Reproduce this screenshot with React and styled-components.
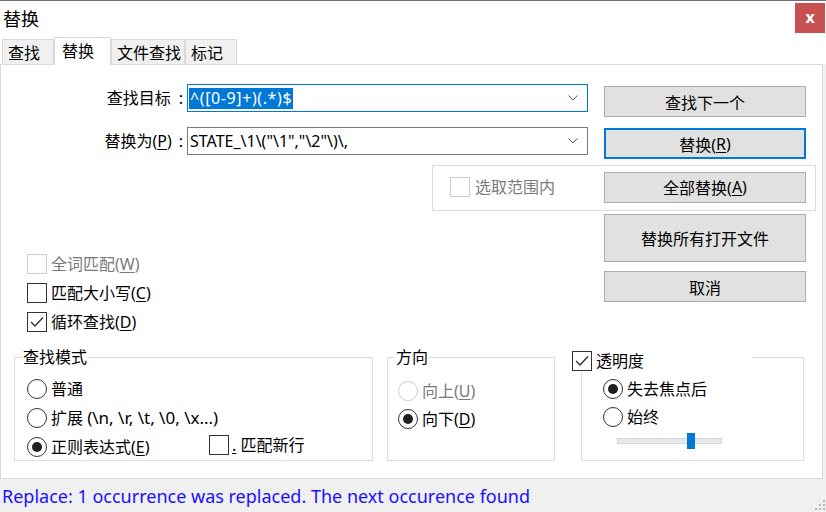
import React from "react";
import styled, { createGlobalStyle, css } from "styled-components";

const FONT = `"Noto Sans", "Noto Sans CJK SC", sans-serif`;

const Global = createGlobalStyle`
  html, body { margin: 0; padding: 0; background: #fff; }
  body { font-family: ${FONT}; }
  *, *::before, *::after { box-sizing: border-box; }
`;

const Window = styled.div`
  width: 826px;
  height: 512px;
  display: flex;
  flex-direction: column;
  background: #fff;
  border-top: 1px solid #6f6f6f;
  overflow: hidden;
  font-family: ${FONT};
  color: #000;
`;

const TitleBar = styled.div`
  height: 36px;
  display: flex;
  align-items: flex-start;
  justify-content: space-between;
  padding: 0 1px 0 3px;
`;

const Title = styled.div`
  font-size: 18px;
  line-height: 36px;
`;

const CloseButton = styled.div`
  margin-top: 2px;
  width: 30px;
  height: 30px;
  background: #c75050;
  color: #fff;
  font-weight: bold;
  font-size: 16px;
  display: flex;
  align-items: center;
  justify-content: center;
  line-height: 1;
  padding-bottom: 3px;
`;

const TabStrip = styled.div`
  height: 27px;
  display: flex;
  align-items: flex-end;
  padding-left: 2px;
  position: relative;
  z-index: 2;
`;

const Tab = styled.div`
  width: ${(p) => p.$w}px;
  height: 25px;
  background: #f0f0f0;
  border: 1px solid #d9d9d9;
  border-bottom: none;
  font-size: 16px;
  line-height: 24px;
  padding: 1px 0 0 5px;
  white-space: nowrap;
  ${(p) =>
    p.$active &&
    css`
      height: 28px;
      margin-bottom: -1px;
      background: #fff;
      padding-left: 7px;
      position: relative;
      z-index: 3;
    `}
`;

const Main = styled.div`
  height: 415px;
  display: flex;
  background: #f0f0f0;
`;

const Panel = styled.div`
  width: 823px;
  height: 415px;
  background: #fff;
  border: 1px solid #d9d9d9;
  padding-top: 19px;
  display: flex;
  flex-direction: column;
`;

const FieldRow = styled.div`
  display: flex;
  align-items: flex-start;
  margin-top: ${(p) => p.$mt || 0}px;
`;

const FieldLabel = styled.div`
  width: 186px;
  display: flex;
  justify-content: flex-end;
  font-size: 16px;
  line-height: 28px;
  padding-right: 4px;
  white-space: nowrap;
`;

const Colon = styled.span`
  margin-left: ${(p) => p.$gap}px;
`;

const Combo = styled.div`
  width: 401px;
  height: 28px;
  border: 1px solid ${(p) => (p.$focus ? "#0078d7" : "#7a7a7a")};
  display: flex;
  align-items: center;
  padding-left: 1px;
  font-size: 16px;
  white-space: nowrap;
`;

const ComboText = styled.span`
  line-height: 21px;
  padding: 0 1px;
  letter-spacing: ${(p) => p.$ls || 0}px;
  ${(p) =>
    p.$selected &&
    css`
      background: #0078d7;
      color: #fff;
    `}
`;

const Chevron = styled.svg`
  margin-left: auto;
  margin-right: 9px;
  flex: none;
`;

const Button = styled.div`
  width: 202px;
  height: ${(p) => p.$h || 31}px;
  margin-top: ${(p) => p.$mt || 0}px;
  margin-left: ${(p) => (p.$push ? "auto" : `${p.$ml || 0}px`)};
  background: #e1e1e1;
  border: ${(p) => (p.$focus ? "2px solid #0078d7" : "1px solid #adadad")};
  display: flex;
  align-items: center;
  justify-content: center;
  font-size: 16px;
  white-space: nowrap;
  flex: none;
`;

const Mn = styled.span`
  text-decoration: underline;
  text-underline-offset: 2px;
  text-decoration-thickness: 1px;
`;

const Latin = styled.span`
  font-size: 17px;
`;

const SelBox = styled.div`
  margin-top: 6px;
  margin-left: 431px;
  width: 384px;
  height: 46px;
  border: 1px solid #dcdcdc;
  display: flex;
  align-items: center;
  padding: 0 9px 2px 17px;
`;

const Option = styled.div`
  display: flex;
  align-items: center;
  gap: ${(p) => p.$gap ?? 4}px;
  height: ${(p) => p.$h || 20}px;
  width: ${(p) => (p.$w ? `${p.$w}px` : "auto")};
  margin-top: ${(p) => p.$mt || 0}px;
  font-size: 16px;
  line-height: 20px;
  white-space: nowrap;
  color: ${(p) => (p.$disabled ? "#7a7a7a" : "#000")};
  flex: none;
`;

const Text = styled.span`
  white-space: nowrap;
`;

const Box = styled.span`
  width: 20px;
  height: 20px;
  border: 1px solid ${(p) => (p.$disabled ? "#cccccc" : "#333")};
  background: #fff;
  display: inline-flex;
  align-items: center;
  justify-content: center;
  flex: none;
`;

const Circle = styled.span`
  width: 20px;
  height: 20px;
  border-radius: 50%;
  border: 1px solid ${(p) => (p.$disabled ? "#cccccc" : "#333")};
  background: #fff;
  display: inline-flex;
  align-items: center;
  justify-content: center;
  flex: none;
  &::after {
    content: "";
    display: ${(p) => (p.$checked ? "block" : "none")};
    width: 10px;
    height: 10px;
    border-radius: 50%;
    background: #1f1f1f;
  }
`;

const LowerRow = styled.div`
  display: flex;
  align-items: flex-start;
`;

const LeftChecks = styled.div`
  padding: 43px 0 0 26px;
  display: flex;
  flex-direction: column;
  gap: 9px;
`;

const RightCol = styled.div`
  margin-left: auto;
  margin-right: 16px;
  padding-top: 3px;
  display: flex;
  flex-direction: column;
  gap: 9px;
`;

const GroupsRow = styled.div`
  display: flex;
  align-items: flex-start;
  padding-left: 13px;
  margin-top: 25px;
`;

const GroupBox = styled.div`
  position: relative;
  width: ${(p) => p.$w}px;
  height: 104px;
  margin-left: ${(p) => p.$ml || 0}px;
  border: 1px solid #dcdcdc;
  padding: ${(p) => p.$pt}px 0 0 ${(p) => p.$pl}px;
  display: flex;
  flex-direction: column;
  gap: ${(p) => p.$gap}px;
`;

const Caption = styled.div`
  position: absolute;
  top: -11px;
  left: 7px;
  background: #fff;
  padding: 0 1px;
  font-size: 16px;
  line-height: 20px;
  white-space: nowrap;
`;

const CheckCaption = styled.div`
  position: absolute;
  top: -7px;
  left: -10px;
  width: 180px;
  height: 21px;
  background: #fff;
  display: flex;
  align-items: flex-start;
  gap: 4px;
  font-size: 16px;
  line-height: 20px;
`;

const RadioRow = styled.div`
  display: flex;
  align-items: center;
  height: 22px;
`;

const SliderWrap = styled.div`
  height: 16px;
  margin-top: -1px;
  padding-left: 14px;
  display: flex;
  align-items: center;
`;

const SliderTrack = styled.div`
  position: relative;
  width: 105px;
  height: 6px;
  background: #e7eaea;
  border: 1px solid #d6d6d6;
`;

const SliderThumb = styled.div`
  position: absolute;
  top: 50%;
  width: 8px;
  height: 16px;
  margin-top: -8px;
  background: #0078d7;
`;

const StatusBar = styled.div`
  height: 33px;
  background: #f0f0f0;
  display: flex;
  align-items: center;
  padding-left: 2px;
  font-size: 18px;
  color: #1a10ff;
  position: relative;
  white-space: nowrap;
`;

const Grip = styled.svg`
  position: absolute;
  right: 1px;
  bottom: 2px;
`;

const CheckMark = () => (
  <svg width="16" height="16" viewBox="0 0 16 16">
    <polyline points="2,8 6,12 14,3.5" fill="none" stroke="#333" strokeWidth="1.4" />
  </svg>
);

const CheckBox = ({ checked, disabled }) => (
  <Box $disabled={disabled}>{checked && <CheckMark />}</Box>
);

const ChevronIcon = () => (
  <Chevron width="10" height="6" viewBox="0 0 10 6">
    <polyline points="0.5,0.5 5,5 9.5,0.5" fill="none" stroke="#555" strokeWidth="1" />
  </Chevron>
);

export default function App() {
  const sliderValue = 0.71;
  return (
    <>
      <Global />
      <Window>
        <TitleBar>
          <Title>替换</Title>
          <CloseButton>x</CloseButton>
        </TitleBar>
        <TabStrip>
          <Tab $w={52}>查找</Tab>
          <Tab $w={57} $active>替换</Tab>
          <Tab $w={74}>文件查找</Tab>
          <Tab $w={52}>标记</Tab>
        </TabStrip>
        <Main>
          <Panel>
            <FieldRow>
              <FieldLabel>
                查找目标<Colon $gap={8}>:</Colon>
              </FieldLabel>
              <Combo $focus>
                <ComboText $selected $ls={0.6}>^([0-9]+)(.*)$</ComboText>
                <ChevronIcon />
              </Combo>
              <Button $ml={16} $mt={2}>查找下一个</Button>
            </FieldRow>
            <FieldRow $mt={10}>
              <FieldLabel>
                替换为(<Mn>P</Mn>)<Colon $gap={7}>:</Colon>
              </FieldLabel>
              <Combo>
                <ComboText>STATE_\1\("\1","\2"\)\,</ComboText>
                <ChevronIcon />
              </Combo>
              <Button $ml={16} $mt={1} $focus>
                替换(<Mn>R</Mn>)
              </Button>
            </FieldRow>
            <SelBox>
              <Option $gap={5} $disabled>
                <CheckBox disabled />
                <Text>选取范围内</Text>
              </Option>
              <Button $push>
                全部替换(<Mn>A</Mn>)
              </Button>
            </SelBox>
            <LowerRow>
              <LeftChecks>
                <Option $disabled>
                  <CheckBox disabled />
                  <Text>
                    全词匹配(<Mn>W</Mn>)
                  </Text>
                </Option>
                <Option>
                  <CheckBox />
                  <Text>
                    匹配大小写(<Mn>C</Mn>)
                  </Text>
                </Option>
                <Option>
                  <CheckBox checked />
                  <Text>
                    循环查找(<Mn>D</Mn>)
                  </Text>
                </Option>
              </LeftChecks>
              <RightCol>
                <Button $h={48}>替换所有打开文件</Button>
                <Button>取消</Button>
              </RightCol>
            </LowerRow>
            <GroupsRow>
              <GroupBox $w={359} $pt={20} $pl={12} $gap={7}>
                <Caption>查找模式</Caption>
                <RadioRow>
                  <Option>
                    <Circle />
                    <Text>普通</Text>
                  </Option>
                </RadioRow>
                <RadioRow>
                  <Option>
                    <Circle />
                    <Text>
                      扩展 <Latin>(\n, \r, \t, \0, \x...)</Latin>
                    </Text>
                  </Option>
                </RadioRow>
                <RadioRow>
                  <Option $w={182}>
                    <Circle $checked />
                    <Text>
                      正则表达式(<Mn>E</Mn>)
                    </Text>
                  </Option>
                  <Option $gap={3} $mt={-5}>
                    <CheckBox />
                    <Text>
                      <Mn>.</Mn> 匹配新行
                    </Text>
                  </Option>
                </RadioRow>
              </GroupBox>
              <GroupBox $w={168} $ml={14} $pt={22} $pl={10} $gap={6}>
                <Caption>方向</Caption>
                <RadioRow>
                  <Option $disabled>
                    <Circle $disabled />
                    <Text>
                      向上(<Mn>U</Mn>)
                    </Text>
                  </Option>
                </RadioRow>
                <RadioRow>
                  <Option>
                    <Circle $checked />
                    <Text>
                      向下(<Mn>D</Mn>)
                    </Text>
                  </Option>
                </RadioRow>
              </GroupBox>
              <GroupBox $w={223} $ml={26} $pt={20} $pl={21} $gap={6}>
                <CheckCaption>
                  <CheckBox checked />
                  <Text>透明度</Text>
                </CheckCaption>
                <RadioRow>
                  <Option>
                    <Circle $checked />
                    <Text>失去焦点后</Text>
                  </Option>
                </RadioRow>
                <RadioRow>
                  <Option>
                    <Circle />
                    <Text>始终</Text>
                  </Option>
                </RadioRow>
                <SliderWrap>
                  <SliderTrack>
                    <SliderThumb style={{ left: `${Math.round(sliderValue * 97)}px` }} />
                  </SliderTrack>
                </SliderWrap>
              </GroupBox>
            </GroupsRow>
          </Panel>
        </Main>
        <StatusBar>
          Replace: 1 occurrence was replaced. The next occurence found
          <Grip width="10" height="10" viewBox="0 0 10 10">
            {[
              [8, 0],
              [8, 4],
              [4, 4],
              [8, 8],
              [4, 8],
              [0, 8],
            ].map(([x, y], i) => (
              <rect key={i} x={x} y={y} width="2" height="2" fill="#b5b5b5" />
            ))}
          </Grip>
        </StatusBar>
      </Window>
    </>
  );
}
